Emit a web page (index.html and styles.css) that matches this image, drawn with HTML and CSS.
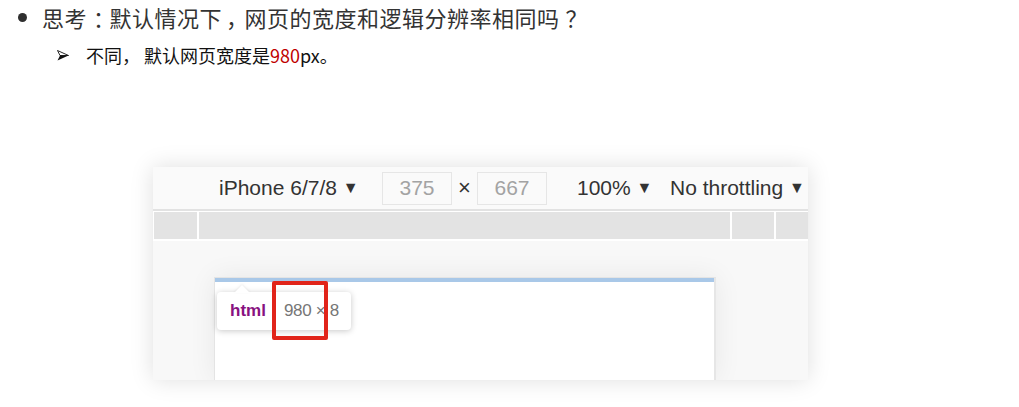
FILE: index.html
```html
<!DOCTYPE html>
<html lang="zh">
<head>
<meta charset="utf-8">
<link rel="stylesheet" href="styles.css">
</head>
<body>
<div class="notes">
  <div class="q">
    <span class="dot"></span>
    <span class="q-text">思考<span class="p">：</span>默认情况下<span class="p pc">，</span>网页的宽度和逻辑分辨率相同吗<span class="p">？</span></span>
  </div>
  <div class="a">
    <svg class="arrow" width="12" height="11" viewBox="0 0 12 11">
      <path d="M0.5 0.5 L11.5 5.5 L3 5.5 Z" fill="#fff" stroke="#111" stroke-width="0.9" stroke-linejoin="round"/>
      <path d="M3 5.5 L11.5 5.5 L0.5 10.5 Z" fill="#111"/>
    </svg>
    <span class="a-text">不同， 默认网页宽度是<span class="red">980</span>px。</span>
  </div>
</div>

<div class="panel">
  <div class="toolbar">
    <span class="device">iPhone 6/7/8 <span class="tri">▼</span></span>
    <span class="num">375</span>
    <span class="times">×</span>
    <span class="num">667</span>
    <span class="zoom">100% <span class="tri">▼</span></span>
    <span class="throttle">No throttling <span class="tri">▼</span></span>
  </div>
  <div class="ruler">
    <span class="seg s1"></span>
    <span class="seg s2"></span>
    <span class="seg s3"></span>
    <span class="seg s4"></span>
  </div>
  <div class="stage">
    <div class="screen">
      <div class="tip">
        <span class="tip-tag">html</span>
        <span class="tip-size">980 × 8</span>
      </div>
      <div class="mark"></div>
    </div>
  </div>
</div>
</body>
</html>
```

FILE: styles.css
```css
html, body {
  margin: 0;
  padding: 0;
  background: #fff;
}
body {
  width: 1019px;
  height: 407px;
  overflow: hidden;
  font-family: "Noto Sans CJK SC", "Noto Sans", sans-serif;
}
.q {
  display: flex;
  align-items: center;
  height: 34px;
  padding-left: 18px;
}
.dot {
  width: 9px;
  height: 9px;
  border-radius: 50%;
  background: #2f2f2f;
  margin-right: 15px;
}
.q-text {
  font-size: 22px;
  color: #333;
  letter-spacing: 0.5px;
  line-height: 34px;
}
.p {
  padding-left: 6px;
  letter-spacing: -5.5px;
}
.pc {
  padding-left: 4px;
  letter-spacing: -3.5px;
}
.a {
  display: flex;
  align-items: center;
  height: 22px;
  margin-top: 10px;
  padding-left: 57px;
}
.arrow {
  margin-right: 17px;
}
.a-text {
  font-size: 18px;
  color: #111;
  line-height: 22px;
}
.red {
  color: #c00000;
}
.panel {
  margin-top: 101px;
  margin-left: 153px;
  width: 655px;
  height: 213px;
  background: #fff;
  box-shadow: 0 0 22px rgba(0, 0, 0, 0.13);
  display: flex;
  flex-direction: column;
  font-family: "Liberation Sans", Arial, sans-serif;
}
.toolbar {
  height: 42px;
  background: #fafafa;
  border-bottom: 2px solid #e2e2e2;
  display: flex;
  align-items: center;
  color: #333;
  font-size: 21px;
}
.device {
  margin-left: 66px;
  width: 163px;
  white-space: nowrap;
}
.tri {
  font-size: 16px;
  position: relative;
  top: -2px;
}
.num {
  box-sizing: border-box;
  width: 70px;
  height: 33px;
  border: 1px solid #e6e6e6;
  color: #a3a3a3;
  display: flex;
  align-items: center;
  justify-content: center;
  background: #fafafa;
}
.times {
  width: 25px;
  text-align: center;
  font-size: 22px;
}
.zoom {
  margin-left: 30px;
  width: 93px;
  white-space: nowrap;
}
.throttle {
  white-space: nowrap;
}
.ruler {
  display: flex;
  gap: 2px;
  height: 27px;
  margin-top: 1px;
  padding-left: 1px;
}
.seg {
  background: #e3e3e3;
  height: 100%;
}
.s1 { width: 43px; }
.s2 { width: 531px; }
.s3 { width: 42px; }
.s4 { flex: 1; }
.stage {
  flex: 1;
  margin-top: 2px;
  background: #f8f8f8;
  padding-left: 61px;
  padding-top: 36px;
  display: flex;
  overflow: hidden;
}
.screen {
  position: relative;
  box-sizing: border-box;
  width: 502px;
  background: #fff;
  border-top: 1px solid #e4e4e4;
  border-left: 1px solid #e4e4e4;
  border-right: 2px solid #e6e6e6;
  box-shadow: 0 0 26px rgba(0, 0, 0, 0.07), inset 0 4px 0 #a9c8e8;
}
.tip {
  position: absolute;
  left: 2px;
  top: 14px;
  width: 134px;
  height: 38px;
  box-sizing: border-box;
  background: #fff;
  border-radius: 4px;
  box-shadow: 0 1px 6px rgba(0, 0, 0, 0.22);
  display: flex;
  align-items: center;
  font-size: 17px;
  padding-left: 13px;
}
.tip::before {
  content: "";
  position: absolute;
  left: 17px;
  top: -7px;
  width: 0;
  height: 0;
  border-left: 8px solid transparent;
  border-right: 8px solid transparent;
  border-bottom: 8px solid #fff;
  filter: drop-shadow(0 -1px 1px rgba(0, 0, 0, 0.08));
}
.tip-tag {
  color: #881280;
  font-weight: bold;
  margin-right: 18px;
}
.tip-size {
  color: #767676;
  letter-spacing: -0.3px;
}
.mark {
  position: absolute;
  left: 57px;
  top: 3px;
  width: 56px;
  height: 59px;
  box-sizing: border-box;
  border: 4px solid #e1241a;
  border-radius: 2px;
}
```
